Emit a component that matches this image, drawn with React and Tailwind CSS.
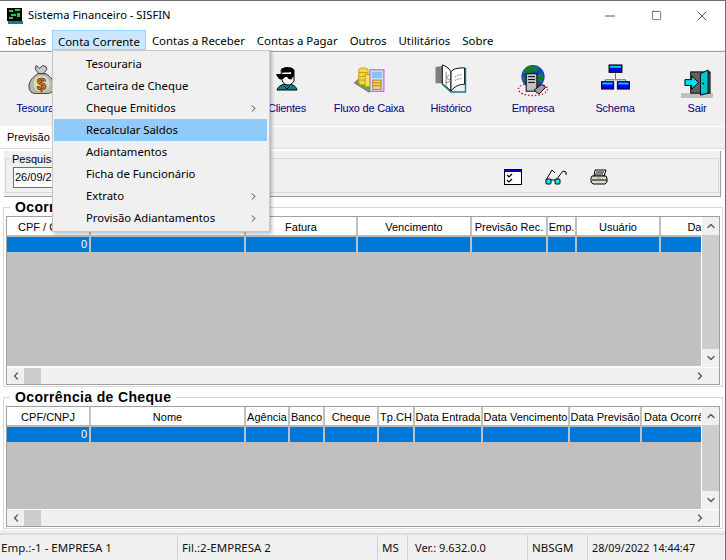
import { ChevronRight, ChevronUp, ChevronDown, ChevronLeft, Minus, Square, X } from "lucide-react";

const menuBar = ["Tabelas", "Conta Corrente", "Contas a Receber", "Contas a Pagar", "Outros", "Utilitários", "Sobre"];

const dropdown = [
	{ label: "Tesouraria" },
	{ label: "Carteira de Cheque" },
	{ label: "Cheque Emitidos", sub: true },
	{ label: "Recalcular Saldos", active: true },
	{ label: "Adiantamentos" },
	{ label: "Ficha de Funcionário" },
	{ label: "Extrato", sub: true },
	{ label: "Provisão Adiantamentos", sub: true },
];

const gridOne = [
	["CPF / CNPJ", 84],
	["Nome", 155],
	["Fatura", 112],
	["Vencimento", 114],
	["Previsão Rec.", 76],
	["Emp.", 29],
	["Usuário", 84],
	["Data", 78],
];

const gridTwo = [
	["CPF/CNPJ", 84],
	["Nome", 155],
	["Agência", 44],
	["Banco", 35],
	["Cheque", 54],
	["Tp.CH", 36],
	["Data Entrada", 68],
	["Data Vencimento", 87],
	["Data Previsão", 72],
	["Data Ocorrência", 86],
];

const MoneyBag = () => (
	<svg width="27" height="32" viewBox="0 0 30 34">
		<path d="M9 1l4 3 3-3 4 1 1 3-4 5H12L8 5z" fill="#c8c8c8" stroke="#333" />
		<path d="M11 10h9c5 3 9 8 9 14 0 6-4 8-7 8H8c-3 0-7-2-7-8 0-6 5-11 10-14z" fill="#b4b8a8" stroke="#333" />
		<circle cx="15" cy="21" r="9" fill="#d8dcc8" />
		<text x="15" y="28" textAnchor="middle" fontSize="19" fontWeight="700" fontFamily="Liberation Sans" fill="#c8860c" stroke="#7a1c00" strokeWidth="0.7">$</text>
	</svg>
);

const Agent = () => (
	<svg width="24" height="24" viewBox="0 0 24 24">
		<path d="M2 23c1-4 5-5 7-6h6c3 1 6 2 7 6z" fill="#0f7f7f" stroke="#000" />
		<path d="M6 3c3-3 11-3 13 0v11c-2 3-4 4-6 4-3 0-5-2-6-5z" fill="#fff" stroke="#000" />
		<path d="M6 2c4-3 12-2 13 1v7l-3-1V5c-3 1-7 0-9 1z" fill="#000" />
		<path d="M1 7h17v2l-1 3c-2 1-4 0-5-2h-2c-1 2-4 3-6 2L2 9z" fill="#000" />
		<path d="M9 19l3 3 3-3" stroke="#000" fill="none" />
	</svg>
);

const Coins = () => (
	<svg width="32" height="28" viewBox="0 0 34 30">
		<path d="M1 17l16 10 4-4v-2L7 12z" fill="#40c020" stroke="#d040d0" />
		<rect x="6" y="1" width="10" height="18" rx="3" fill="#f4d840" stroke="#c0a020" />
		<path d="M6 6h10M6 10h10M6 14h10" stroke="#c89820" />
		<rect x="13" y="8" width="7" height="13" fill="#f8e060" stroke="#c0a020" />
		<rect x="18" y="3" width="15" height="23" fill="#cfe4f8" stroke="#c040e0" strokeWidth="1" />
		<rect x="20" y="5" width="11" height="7" fill="#8cc0f0" />
		<rect x="21" y="14" width="9" height="10" fill="#f4d070" stroke="#b08020" />
		<path d="M21 17h9M21 20h9" stroke="#b08020" />
	</svg>
);

const Book = () => (
	<svg width="32" height="29" viewBox="0 0 32 30">
		<path d="M0 3l7-1 12 26L6 20H0z" fill="#7f7f7f" />
		<path d="M7 1c3 1 7 3 9 7v20c-3-3-6-6-9-7z" fill="#fff" stroke="#000" />
		<path d="M16 8c2-3 7-4 14-4v17c-6 0-10 2-14 7z" fill="#fff" stroke="#000" />
		<path d="M7 21l9 8h15V4" fill="none" stroke="#0f7f7f" strokeWidth="1.5" />
		<path d="M11 8v14M14 12c-3 0-3 4 0 4s0 4-4 3" stroke="#808080" fill="none" />
		<path d="M20 14c0-2 4-3 8-3M20 17c2-1 5-2 7-2" stroke="#808080" fill="none" strokeDasharray="2 1" />
	</svg>
);

const Globe = () => (
	<svg width="32" height="33" viewBox="0 0 32 34">
		<circle cx="16" cy="13" r="12" fill="#1840c8" />
		<path d="M8 4c4-3 10-3 14 0l-3 4-4-1-1 3-5 1-3-3zM19 12l6-3 2 4-2 6-5-2zM5 12l4 2 1 4-4-1z" fill="#108030" />
		<ellipse cx="16" cy="26" rx="15" ry="6.5" fill="none" stroke="#e01010" strokeWidth="1.4" strokeDasharray="1.5 2" />
		<rect x="9" y="10" width="11" height="18" fill="#c0c0c0" stroke="#000" />
		<path d="M11 13h7M11 16h7M11 19h7" stroke="#000" />
		<path d="M17 27l8-6 4 3-7 7z" fill="#a0a0a0" stroke="#000" />
	</svg>
);

const Schema = () => (
	<svg width="31" height="26" viewBox="0 0 32 28">
		<path d="M16 10v6M5 21v-4h22v4" fill="none" stroke="#606060" />
		<rect x="9" y="1" width="14" height="8" fill="#0000f0" stroke="#000" />
		<rect x="10" y="2" width="12" height="2" fill="#00d0f0" />
		<rect x="1" y="19" width="13" height="8" fill="#0000f0" stroke="#000" />
		<rect x="2" y="20" width="11" height="2" fill="#00d0f0" />
		<rect x="18" y="19" width="13" height="8" fill="#0000f0" stroke="#000" />
		<rect x="19" y="20" width="11" height="2" fill="#00d0f0" />
	</svg>
);

const ExitDoor = () => (
	<svg width="33" height="29" viewBox="0 0 34 30">
		<path d="M0 25h33v5H0z" fill="#c0c0c0" />
		<rect x="10" y="3" width="20" height="22" fill="#606060" stroke="#000" />
		<path d="M20 5l8-4v24l-8 2z" fill="#00c8c8" stroke="#000" />
		<circle cx="23" cy="15" r="1" fill="#000" />
		<path d="M4 11h7V7l7 7-7 7v-4H4z" fill="#00e0f0" stroke="#000" />
	</svg>
);

const Checklist = () => (
	<svg width="18" height="16" viewBox="0 0 18 16">
		<rect x="0.5" y="0.5" width="17" height="15" fill="#fff" stroke="#000" />
		<rect x="1" y="1" width="16" height="2" fill="#0000c0" />
		<path d="M3 6l2 2 3-3M3 11l2 2 3-3" fill="none" stroke="#000" strokeWidth="1.2" />
	</svg>
);

const Glasses = () => (
	<svg width="22" height="16" viewBox="0 0 22 16">
		<path d="M1 11L7 1l3 3M11 11l7-9 3 1 0 3" fill="none" stroke="#000" />
		<path d="M6 11h5" stroke="#000" />
		<rect x="1" y="10" width="5" height="5" rx="1" fill="#00e8f0" stroke="#000" />
		<rect x="10" y="10" width="5" height="5" rx="1" fill="#00e8f0" stroke="#000" />
	</svg>
);

const Printer = () => (
	<svg width="18" height="16" viewBox="0 0 18 16">
		<path d="M5 1h11l-2 6H4z" fill="#fff" stroke="#000" />
		<path d="M6 3h8M5 5h8" stroke="#000" />
		<path d="M2 7h14l1 2v4l-2 2H3l-2-2V9z" fill="#d8d8d8" stroke="#000" />
		<path d="M2 11h15" stroke="#000" />
		<path d="M7 9h4" stroke="#d0a000" />
	</svg>
);

const ToolButton = ({ label, children, iconTop = "pt-0" }) => (
	<div className="w-[82px] shrink-0 flex flex-col items-center">
		<div className={`h-[37px] flex items-start justify-center ${iconTop}`}>{children}</div>
		<span className="text-[#000080] text-[11px] tracking-[-0.2px] leading-[14px] whitespace-nowrap">{label}</span>
	</div>
);

const Grid = ({ columns, bodyHeight, thumbHeight }) => (
	<div className="mx-[2px] border border-[#a0a0a0] flex flex-col">
		<div className="flex">
			<div className="w-[694px] overflow-hidden">
				<div className="flex h-[20px] bg-white border-b-2 border-[#b8b8b8] w-max">
					{columns.map(([title, width]) => (
						<div
							key={title}
							style={{ width }}
							className="border-r-2 border-[#c0c0c0] text-center text-[11px] leading-[20px] whitespace-nowrap overflow-hidden text-[#000]"
						>
							{title}
						</div>
					))}
				</div>
				<div className="flex h-[16px] bg-[#0078d7] border-b border-[#c0c0c0] w-max">
					{columns.map(([title, width], index) => (
						<div
							key={title}
							style={{ width }}
							className="border-r-2 border-[#c0c0c0] text-right pr-[2px] text-white text-[11px] leading-[15px]"
						>
							{index === 0 ? "0" : ""}
						</div>
					))}
				</div>
				<div className="bg-[#c0c0c0]" style={{ height: bodyHeight }} />
			</div>
			<div className="w-[18px] bg-[#f0f0f0] flex flex-col border-l border-white">
				<div className="h-[18px] flex items-center justify-center">
					<ChevronUp size={12} strokeWidth={3} color="#606060" />
				</div>
				<div className="bg-[#cdcdcd]" style={{ height: thumbHeight }} />
				<div className="flex-1" />
				<div className="h-[18px] flex items-center justify-center">
					<ChevronDown size={12} strokeWidth={3} color="#606060" />
				</div>
			</div>
		</div>
		<div className="h-[17px] bg-[#f0f0f0] flex items-center border-t border-white">
			<div className="w-[17px] flex justify-center">
				<ChevronLeft size={12} strokeWidth={3} color="#606060" />
			</div>
			<div className="w-[17px] h-full bg-[#cdcdcd]" />
			<div className="flex-1" />
			<div className="w-[26px] pl-[1px]">
				<ChevronRight size={12} strokeWidth={3} color="#606060" />
			</div>
		</div>
	</div>
);

const Group = ({ title, children, className }) => (
	<fieldset className={`mx-[3px] border border-[#d8d8d8] pb-[1px] ${className}`}>
		<legend className="ml-[6px] px-[5px] text-[14px] leading-[18px] font-bold tracking-[0.35px] text-black">{title}</legend>
		{children}
	</fieldset>
);

const App = () => {
	return (
		<div
			className="relative w-[726px] h-[560px] flex flex-col bg-white border-t border-r border-[#707070] overflow-hidden text-black"
			style={{ fontFamily: '"Liberation Sans", sans-serif' }}
		>
			{/* title bar */}
			<div className="h-[29px] flex items-center pl-[7px] font-['Noto_Sans'] text-[11.2px]">
				<svg width="16" height="16" viewBox="0 0 16 16" className="mr-[5px]">
					<rect x="0" y="0" width="15" height="13" fill="#000" />
					<path d="M2 2h4v2H2zM8 1h5v2H8zM4 6h5v2H4zM10 5h3v4h-3zM2 9h4v2H2z" fill="#20d040" />
					<rect x="1" y="13" width="15" height="3" fill="#108080" />
				</svg>
				<span>Sistema Financeiro - SISFIN</span>
				<div className="ml-auto flex items-center">
					<div className="w-[46px] flex justify-center"><Minus size={16} strokeWidth={1} /></div>
					<div className="w-[46px] flex justify-center"><Square size={11} strokeWidth={1.2} /></div>
					<div className="w-[46px] flex justify-center"><X size={16} strokeWidth={1} /></div>
				</div>
			</div>

			{/* menu bar */}
			<div className="h-[21px] flex font-['Noto_Sans'] text-[11.4px] leading-[21px] border-b border-[#f0f0f0]">
				{menuBar.map((item) => (
					<div
						key={item}
						className={
							item === "Conta Corrente"
								? "px-[5px] h-[20px] bg-[#cce8ff] border border-[#99d1ff]"
								: "px-[6px]"
						}
					>
						{item}
					</div>
				))}
			</div>

			{/* toolbar */}
			<div className="h-[76px] bg-[#f0f0f0] border-t border-[#a0a0a0] border-b border-b-white flex pt-[12px]">
				<ToolButton label="Tesouraria"><MoneyBag /></ToolButton>
				<ToolButton label="" />
				<ToolButton label="" />
				<ToolButton label="Clientes" iconTop="pt-[3px]"><Agent /></ToolButton>
				<ToolButton label="Fluxo de Caixa" iconTop="pt-[3px]"><Coins /></ToolButton>
				<ToolButton label="Histórico"><Book /></ToolButton>
				<ToolButton label="Empresa"><Globe /></ToolButton>
				<ToolButton label="Schema"><Schema /></ToolButton>
				<ToolButton label="Sair" iconTop="pt-[5px]"><ExitDoor /></ToolButton>
			</div>

			{/* tab strip */}
			<div className="h-[22px] flex bg-[#f0f0f0] border-b border-[#dcdcdc]">
				<div className="w-[52px] bg-white pl-[7px] text-[11px] leading-[20px]">Previsão</div>
			</div>

			{/* search panel */}
			<div className="mt-[2px] mx-[4px] h-[46px] bg-[#f0f0f0] border-r border-b border-[#a0a0a0] pt-[1px] px-[1px]">
				<fieldset className="h-[41px] border border-[#d8d8d8] pl-[7px] flex">
					<legend className="ml-[-3px] px-[2px] text-[11px] leading-[14px] h-[12px]">Pesquisa</legend>
					<div className="flex items-center h-[26px] w-full">
						<div className="w-[102px] h-[21px] bg-white border border-[#6d6d6d] text-[11px] leading-[19px] pl-[1px]">
							26/09/2022
						</div>
						<div className="ml-[389px] flex items-center gap-[23px]">
							<Checklist />
							<Glasses />
							<Printer />
						</div>
					</div>
				</fieldset>
			</div>

			<Group title="Ocorrência de Previsão" className="mt-[1px]">
				<Grid columns={gridOne} bodyHeight={113} thumbHeight={114} />
			</Group>

			<Group title="Ocorrência de Cheque" className="mt-[1px]">
				<Grid columns={gridTwo} bodyHeight={66} thumbHeight={66} />
			</Group>

			<div className="flex-1 bg-[#f0f0f0] mt-[1px]" />

			{/* status bar */}
			<div className="h-[27px] bg-[#f0f0f0] border-t-2 border-[#dcdcdc] flex font-['Noto_Sans'] text-[11.5px] leading-[26px] text-[#111] relative">
				<div className="w-[178px] pl-[1px] border-r border-[#d0d0d0]">Emp.:-1 - EMPRESA 1</div>
				<div className="w-[200px] pl-[4px] border-r border-[#d0d0d0]">Fil.:2-EMPRESA 2</div>
				<div className="w-[30px] pl-[4px] border-r border-[#d0d0d0]">MS</div>
				<div className="w-[120px] pl-[7px] border-r border-[#d0d0d0] text-[11px]">Ver.: 9.632.0.0</div>
				<div className="w-[60px] pl-[4px] border-r border-[#d0d0d0]">NBSGM</div>
				<div className="pl-[4px] text-[10.8px]">28/09/2022 14:44:47</div>
			</div>

			{/* dropdown */}
			<div className="absolute left-[52px] top-[49px] w-[218px] h-[182px] bg-[#f0f0f0] border border-[#c8c8c8] shadow-[2px_2px_3px_rgba(0,0,0,0.25)] pl-[1px] pr-[2px] pt-[2px] font-['Noto_Sans'] text-[11.3px]">
				{dropdown.map((entry) => (
					<div
						key={entry.label}
						className={`h-[22px] flex items-center pl-[32px] pr-[8px] ${entry.active ? "bg-[#91c9f7]" : ""}`}
					>
						<span>{entry.label}</span>
						{entry.sub && <ChevronRight size={11} strokeWidth={1.6} className="ml-auto" />}
					</div>
				))}
			</div>
		</div>
	);
};

export default App;
